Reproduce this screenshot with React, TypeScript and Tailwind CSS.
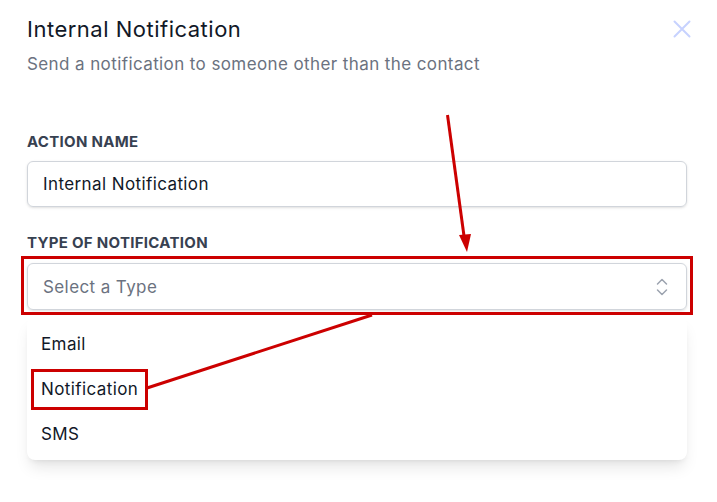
import React from "react";

export default function App() {
  return (
    <div
      className="relative w-[717px] h-[502px] bg-white overflow-hidden"
      style={{ fontFamily: "Inter, 'Noto Sans', sans-serif" }}
    >
      <div className="pl-[27px] pr-[30px] pt-[15px]">
        <div className="flex items-center justify-between">
          <h1 className="text-[22px] leading-[28px] tracking-[0.5px] text-[#111827] font-normal">Internal Notification</h1>
          <svg className="-mr-[4px]" width="18" height="18" viewBox="0 0 18 18" fill="none">
            <path d="M1.5 1.5L16.5 16.5M16.5 1.5L1.5 16.5" stroke="#c7d2fe" strokeWidth="2" strokeLinecap="round" />
          </svg>
        </div>
        <p className="mt-[9px] text-[17px] leading-6 tracking-[0.4px] text-[#6b7280]">
          Send a notification to someone other than the contact
        </p>

        <div className="mt-[56px]">
          <div className="text-[15px] leading-5 font-bold tracking-[0.3px] text-[#374151]">ACTION NAME</div>
          <div className="mt-[9px] h-[46px] rounded-md border border-[#d1d5db] shadow-sm px-[15px] flex items-center text-[17px] leading-6 tracking-[0.4px] text-[#111827]">
            Internal Notification
          </div>
        </div>

        <div className="mt-[26px]">
          <div className="text-[15px] leading-5 font-bold tracking-[0.3px] text-[#374151]">TYPE OF NOTIFICATION</div>
          <div className="relative mt-[10px]">
            <div className="h-[47px] rounded-md border border-[#d1d5db] shadow-sm px-[15px] flex items-center justify-between text-[17px] leading-6 tracking-[0.4px] text-[#6b7280]">
              <span>Select a Type</span>
              <svg className="mr-[3px]" width="12" height="18" viewBox="0 0 12 18" fill="none">
                <path d="M1.5 6L6 1.5L10.5 6" stroke="#9ca3af" strokeWidth="1.5" strokeLinecap="round" strokeLinejoin="round" />
                <path d="M1.5 12L6 16.5L10.5 12" stroke="#9ca3af" strokeWidth="1.5" strokeLinecap="round" strokeLinejoin="round" />
              </svg>
            </div>
            <div className="absolute -left-[6px] -right-[6px] -top-[7px] -bottom-[5px] border-[3px] border-[#cc0000] pointer-events-none" />
          </div>

          <div className="mt-[7px] rounded-lg bg-white shadow-lg py-1">
            <div className="h-[45px] px-[14px] flex items-center text-[17px] leading-6 tracking-[0.4px] text-[#111827]">Email</div>
            <div className="h-[45px] px-[14px] flex items-center text-[17px] leading-6 tracking-[0.4px] text-[#111827]">
              <span className="relative">
                Notification
                <span className="absolute -left-[10px] -right-[10px] -top-[8px] -bottom-[9px] border-[3px] border-[#cc0000]" />
              </span>
            </div>
            <div className="h-[45px] px-[14px] flex items-center text-[17px] leading-6 tracking-[0.4px] text-[#111827]">SMS</div>
          </div>
        </div>
      </div>

      <svg className="absolute inset-0 pointer-events-none" width="717" height="502" viewBox="0 0 717 502">
        <line x1="447.5" y1="115" x2="464" y2="236" stroke="#cc0000" strokeWidth="3" />
        <polygon points="459,235 471,234 467,252" fill="#cc0000" />
        <line x1="147" y1="388" x2="372" y2="315" stroke="#cc0000" strokeWidth="3" />
      </svg>
    </div>
  );
}
